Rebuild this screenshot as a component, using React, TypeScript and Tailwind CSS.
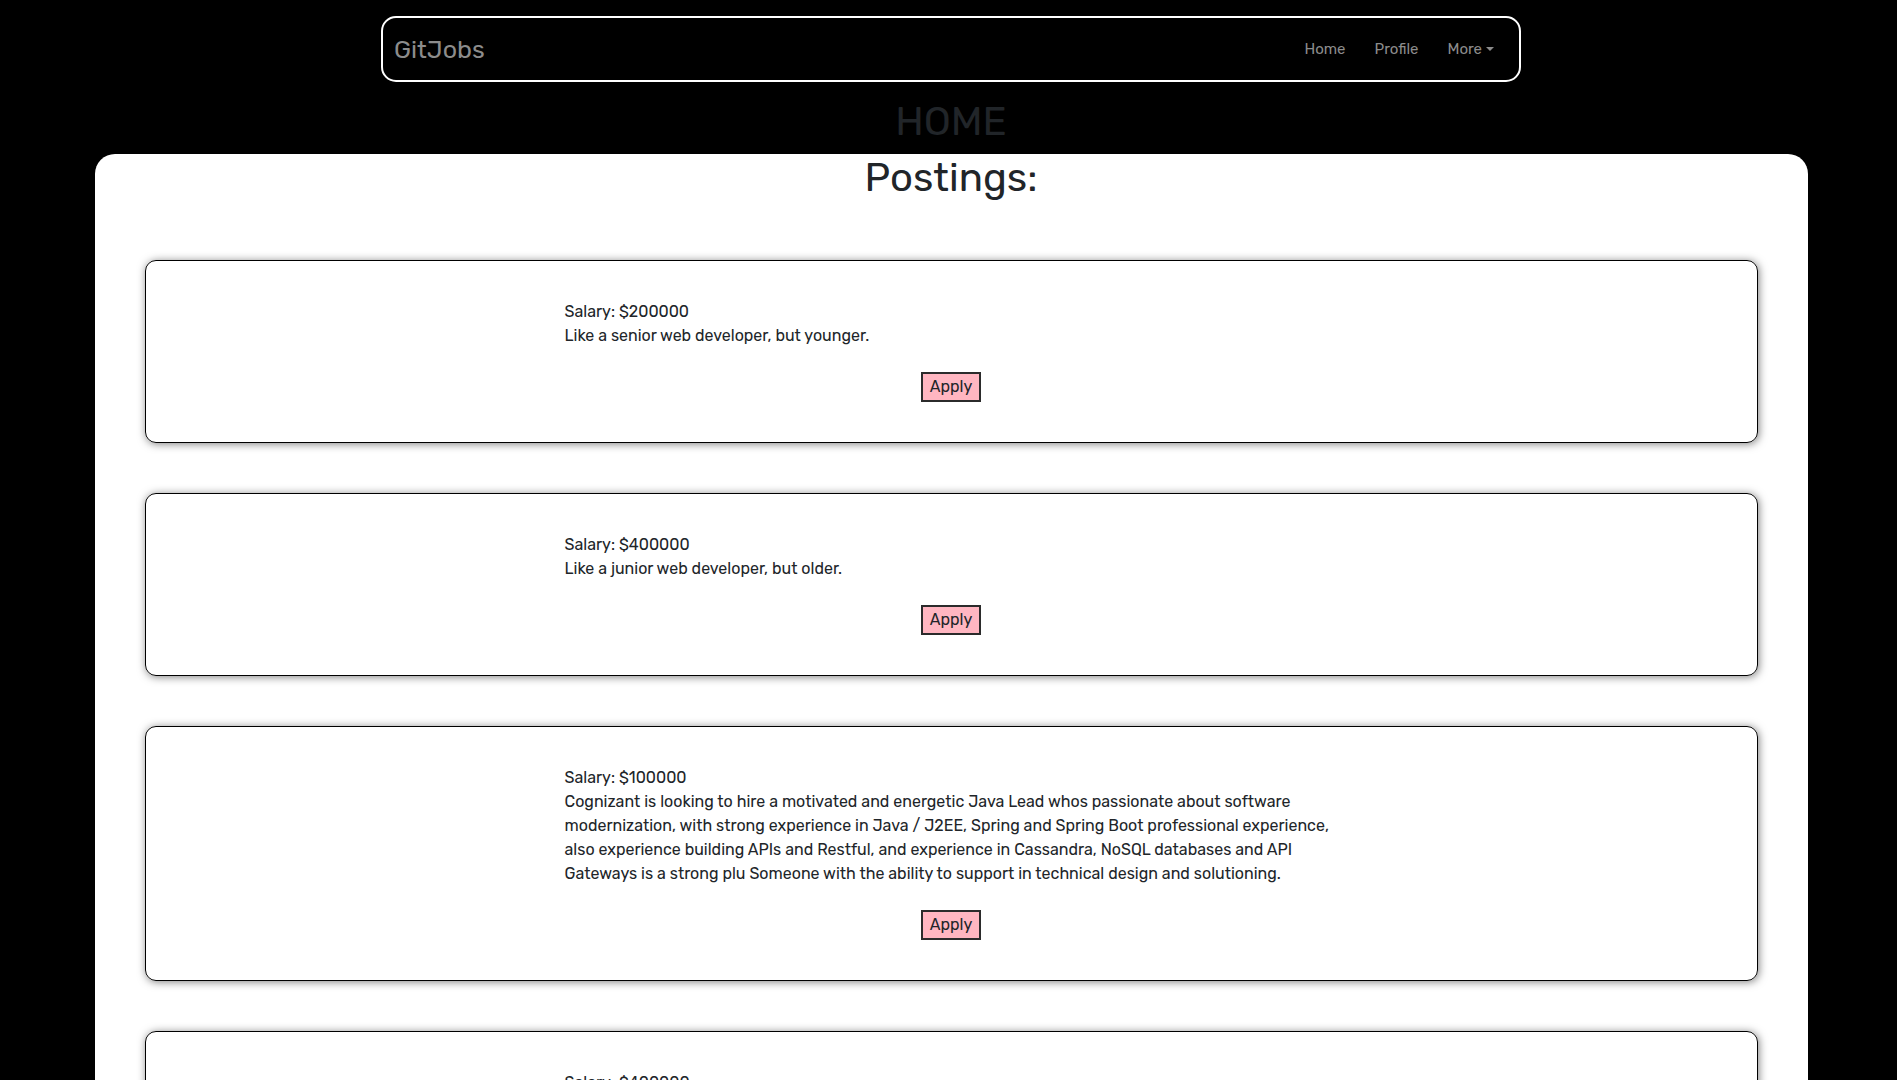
import { useState } from "react";

const postings = [
  { salary: 200000, description: "Like a senior web developer, but younger." },
  { salary: 400000, description: "Like a junior web developer, but older." },
  {
    salary: 100000,
    description:
      "Cognizant is looking to hire a motivated and energetic Java Lead whos passionate about software modernization, with strong experience in Java / J2EE, Spring and Spring Boot professional experience, also experience building APIs and Restful, and experience in Cassandra, NoSQL databases and API Gateways is a strong plu Someone with the ability to support in technical design and solutioning.",
  },
  { salary: 400000, description: "Like a junior web developer, but older." },
];

const Navbar = () => {
  const [open, setOpen] = useState(false);

  return (
    <nav className="w-[1140px] h-[66px] mx-auto border-2 border-white rounded-[15px] flex items-center justify-between pl-[11px] pr-[25px]">
      <a href="#" className="text-[25px] text-[#8c8c8c] leading-none">
        GitJobs
      </a>
      <ul className="flex items-center gap-[29px] text-[15px] text-[#8c8c8c]">
        <li>
          <a href="#">Home</a>
        </li>
        <li>
          <a href="#">Profile</a>
        </li>
        <li className="relative">
          <button
            className="flex items-center gap-[4px]"
            onClick={() => setOpen(!open)}
          >
            More
            <span className="w-0 h-0 border-x-[4px] border-x-transparent border-t-[4px] border-t-[#8c8c8c]" />
          </button>
        </li>
      </ul>
    </nav>
  );
};

const PostingCard = ({ salary, description }: { salary: number; description: string }) => {
  return (
    <div className="border border-black rounded-[11px] shadow-[1px_1px_8px_rgba(0,0,0,0.5)] pt-[39px] pb-[40px]">
      <div className="w-[776px] ml-[419px] text-[16px] leading-[24px] text-[#212529]">
        <p>Salary: ${salary}</p>
        <p>{description}</p>
      </div>
      <div className="flex justify-center mt-[24px]">
        <button className="bg-[#ffb6c1] border-2 border-[#2b2b2b] text-[16px] text-[#212529] h-[30px] px-[7px] leading-none">
          Apply
        </button>
      </div>
    </div>
  );
};

export default function App() {
  return (
    <div className="min-h-screen bg-black pt-4 pl-[5px] font-['Rubik','Roboto',sans-serif]">
      <Navbar />
      <h1 className="text-center text-[40px] leading-[48px] text-[#212529] mt-[16px] mb-[8px]">
        HOME
      </h1>
      <main className="w-[1713px] mx-auto bg-white rounded-t-[20px] px-[50px] pb-[50px]">
        <h1 className="text-center text-[40px] leading-[48px] text-[#212529] mt-[1px] mb-[58px]">
          Postings:
        </h1>
        <div className="flex flex-col gap-[50px]">
          {postings.map((p, i) => (
            <PostingCard key={i} salary={p.salary} description={p.description} />
          ))}
        </div>
      </main>
    </div>
  );
}
